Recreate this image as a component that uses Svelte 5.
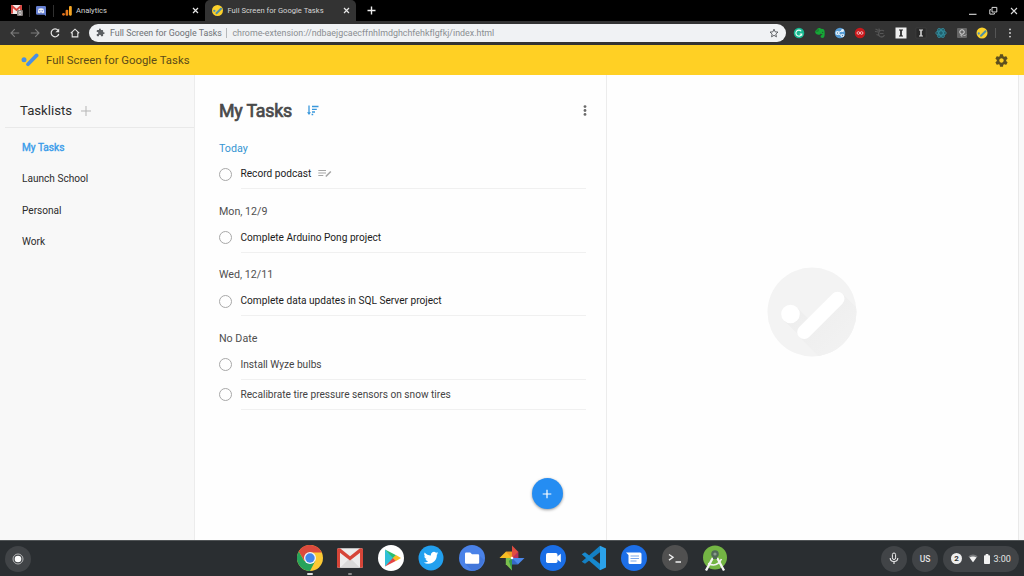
<script>
  const lists = ['My Tasks', 'Launch School', 'Personal', 'Work'];
  const groups = [
    { label: 'Today', today: true, dark: true, tasks: [{ title: 'Record podcast', notes: true }] },
    { label: 'Mon, 12/9', dark: true, tasks: [{ title: 'Complete Arduino Pong project' }] },
    { label: 'Wed, 12/11', dark: true, tasks: [{ title: 'Complete data updates in SQL Server project' }] },
    { label: 'No Date', tasks: [{ title: 'Install Wyze bulbs' }, { title: 'Recalibrate tire pressure sensors on snow tires' }] }
  ];
  const apps = ['chrome', 'gmail', 'play', 'twitter', 'files', 'photos', 'duo', 'code', 'messages', 'terminal', 'android'];
  const extensions = ['grammarly', 'evernote', 'share', 'lastpass', 'dim', 'insta', 'instadark', 'react', 'search', 'tasks'];
</script>

{#snippet tasksLogo()}
  <svg width="11" height="11" viewBox="0 0 22 22">
    <circle cx="11" cy="11" r="11" fill="#fbd02b" />
    <circle cx="4.6" cy="11.6" r="2.3" fill="#4b8fc0" />
    <path d="M9 16.5 18 7.5" stroke="#4b8fa8" stroke-width="4" stroke-linecap="round" />
  </svg>
{/snippet}

{#snippet cross()}
  <svg width="7" height="7" viewBox="0 0 7 7"><path d="M1 1l5 5M6 1 1 6" stroke="#e8e8e8" stroke-width="1.2" /></svg>
{/snippet}

<div class="screen">
  <div class="tabs">
    <span class="pinned first">
      <svg width="12" height="11" viewBox="0 0 12 11">
        <rect width="11" height="9" rx="1" fill="#f4e9e8" />
        <path d="M1 8.5V1l4.5 4L10 1v5" fill="none" stroke="#d5423c" stroke-width="1.9" />
        <rect x="6" y="5" width="6" height="6" rx="1" fill="#88807f" />
        <path d="M8 6.5h2v3H8z" fill="none" stroke="#ddd" stroke-width=".8" />
      </svg>
    </span>
    <span class="pinned second">
      <svg width="10" height="10" viewBox="0 0 10 10">
        <path d="M1.300 0h7.400A1.300 1.300 0 0 1 10 1.300V10L8.300 8.800h-7A1.300 1.300 0 0 1 0 7.500V1.300A1.300 1.300 0 0 1 1.300 0z" fill="#6680d2" />
        <path d="M1.800 6.600 2.500 2.800q2.500-1 5 0l.7 3.800-1.700.6-.5-.7H4l-.5.7z" fill="#f2f4fb" />
        <circle cx="3.800" cy="4.800" r=".7" fill="#6680d2" /><circle cx="6.200" cy="4.800" r=".7" fill="#6680d2" />
      </svg>
    </span>
    <div class="tab analytics">
      <svg width="10" height="10" viewBox="0 0 10 10">
        <circle cx="1.500" cy="8.300" r="1.400" fill="#e0701c" />
        <rect x="3.600" y="3.700" width="2.600" height="6" rx="1" fill="#e5791d" />
        <rect x="7" y="0" width="2.800" height="9.700" rx="1.100" fill="#f5a623" />
      </svg>
      <span class="title">Analytics</span>
      {@render cross()}
    </div>
    <div class="tab active">
      {@render tasksLogo()}
      <span class="title">Full Screen for Google Tasks</span>
      {@render cross()}
    </div>
    <svg class="newtab" width="9" height="9" viewBox="0 0 9 9"><path d="M4.500.5v8M.5 4.500h8" stroke="#eee" stroke-width="1.400" /></svg>
    <div class="window">
      <svg width="8" height="10" viewBox="0 0 8 10"><path d="M0 8.300h7.500" stroke="#ddd" stroke-width="1.100" /></svg>
      <svg width="9" height="9" viewBox="0 0 9 9"><path d="M3 1.400h4.800v4.600H3zM2 3.700H.8V8.100h4.600V7" fill="none" stroke="#ddd" stroke-width="1" /></svg>
      <svg width="8" height="8" viewBox="0 0 8 8"><path d="M1 1l6 6M7 1 1 7" stroke="#ddd" stroke-width="1.100" /></svg>
    </div>
  </div>

  <div class="toolbar">
    <div class="nav">
      <svg width="10" height="10" viewBox="0 0 10 10"><path d="M9.200 5H1.200M4.800 1.200 1 5l3.800 3.800" fill="none" stroke="#7d7d7d" stroke-width="1.100" /></svg>
      <svg width="10" height="10" viewBox="0 0 10 10"><path d="M.8 5h8M5.200 1.200 9 5 5.200 8.800" fill="none" stroke="#7d7d7d" stroke-width="1.100" /></svg>
      <svg width="10" height="10" viewBox="0 0 10 10"><path d="M8.100 2.400A3.900 3.900 0 1 0 8.800 6" fill="none" stroke="#e6e6e6" stroke-width="1.200" /><path d="M9.200.5v3.800H5.400z" fill="#e6e6e6" /></svg>
      <svg width="10" height="10" viewBox="0 0 10 10"><path d="M.8 5.200 5 1.200l4.200 4M2.200 4.600v4.300h5.600V4.600" fill="none" stroke="#e6e6e6" stroke-width="1.100" /></svg>
    </div>
    <div class="omnibox">
      <svg width="9" height="9" viewBox="0 0 24 24"><path fill="#5b5f63" d="M20.500 11H19V7a2 2 0 0 0-2-2h-4V3.500a2.500 2.500 0 0 0-5 0V5H4a2 2 0 0 0-2 2v3.800h1.500a2.700 2.700 0 0 1 0 5.400H2V20c0 1.100.9 2 2 2h3.800v-1.500a2.700 2.700 0 0 1 5.400 0V22H17a2 2 0 0 0 2-2v-4h1.500a2.500 2.500 0 0 0 0-5z" /></svg>
      <span class="site">Full Screen for Google Tasks</span>
      <span class="bar"></span>
      <span class="url">chrome-extension://ndbaejgcaecffnhlmdghchfehkflgfkj/index.html</span>
      <svg class="star" width="10" height="10" viewBox="0 0 24 24"><path d="m12 2.800 2.700 6.400 6.900.6-5.200 4.600 1.500 6.800-5.900-3.600-5.900 3.600 1.500-6.800-5.200-4.600 6.900-.6z" fill="none" stroke="#55595d" stroke-width="2.200" /></svg>
    </div>
    <div class="extensions">
      {#each extensions as e}
        <svg width="12" height="12" viewBox="0 0 24 24">
          {#if e === 'grammarly'}
            <circle cx="12" cy="12" r="10.500" fill="#17b890" />
            <path d="M16.500 8.500A6 6 0 1 0 17.500 14h-4M17.500 14v3.500" fill="none" stroke="#eafff8" stroke-width="2.200" />
          {:else if e === 'evernote'}
            <path d="M2 8.500 8.500 2H12q1 0 1.500 1.500 6 0 7 2.500 1.500 4 .8 10-.5 6-4.300 6-4.500 0-4-3.500.3-2.500 4-2.300l-.2-1.200q-2-.2-3.300-2-.5 3-4.500 2.500-4.500-.3-5.500-2.500Q2.500 11 2 8.500z" fill="#16a637" />
            <path d="M8.300 3v5.300H3" fill="none" stroke="#1c5a2b" stroke-width="1.200" /><circle cx="17.300" cy="10.500" r="1.200" fill="#24432b" />
          {:else if e === 'share'}
            <circle cx="12" cy="12" r="10.500" fill="#559bd4" />
            <path d="M7 12l10-5M7 12l9 6" stroke="#eef6fc" stroke-width="2" />
            <circle cx="7" cy="12" r="4" fill="#e5f1fa" /><circle cx="17" cy="7" r="3" fill="#e5f1fa" /><circle cx="17" cy="17" r="3.600" fill="#d9eaf7" />
            <circle cx="7" cy="12" r="1.400" fill="#4b80b0" /><circle cx="17" cy="17" r="1.300" fill="#4b80b0" />
          {:else if e === 'lastpass'}
            <circle cx="12" cy="12" r="10.500" fill="#c8191d" />
            <circle cx="8.800" cy="12" r="2.700" fill="none" stroke="#f3c7c7" stroke-width="1.800" /><circle cx="15.200" cy="12" r="2.700" fill="none" stroke="#f3c7c7" stroke-width="1.800" />
          {:else if e === 'dim'}
            <path d="M3 4l6 3M2 9l7 1M10 3l1 5q5-3 9 0M11 8q-4 8 1 11 6 3 9-3M12 13h7M5 15l5 2" fill="none" stroke="#565656" stroke-width="2.400" />
          {:else if e === 'insta'}
            <path d="M1 1h22v22H1z" fill="#efefef" /><path d="M8 5h8v2h-2.300v10H16v2H8v-2h2.300V7H8z" fill="#202020" />
          {:else if e === 'instadark'}
            <path d="M2 2h20v20H2z" fill="#292929" stroke="#444" /><path d="M8 5h8v2h-2.500v10H16v2H8v-2h2.500V7H8z" fill="#dcdcdc" />
          {:else if e === 'react'}
            <circle cx="12" cy="12" r="9" fill="#20606d" />
            <g fill="none" stroke="#358f9f" stroke-width="1.600"><ellipse cx="12" cy="12" rx="10.500" ry="4.200" /><ellipse cx="12" cy="12" rx="10.500" ry="4.200" transform="rotate(60 12 12)" /><ellipse cx="12" cy="12" rx="10.500" ry="4.200" transform="rotate(120 12 12)" /></g>
          {:else if e === 'search'}
            <rect x="2" y="2" width="20" height="20" rx="2" fill="#666" />
            <circle cx="12" cy="10" r="4.500" fill="none" stroke="#dedede" stroke-width="2" /><path d="M10 15v3h3M15 16l2 2 3-3" stroke="#ccc" stroke-width="1.800" fill="none" />
          {:else}
            <circle cx="12" cy="12" r="11" fill="#fbd02b" /><circle cx="5.500" cy="13" r="2.300" fill="#4b8fc0" /><path d="M10 17.500 19 8.500" stroke="#4b8fa8" stroke-width="4" stroke-linecap="round" />
          {/if}
        </svg>
      {/each}
    </div>
    <span class="divider"></span>
    <svg class="menu" width="4" height="10" viewBox="0 0 4 10"><g fill="#ddd"><circle cx="2" cy="1.400" r=".9" /><circle cx="2" cy="5" r=".9" /><circle cx="2" cy="8.600" r=".9" /></g></svg>
  </div>

  <header>
    <svg width="18" height="14" viewBox="0 0 18 14"><circle cx="3" cy="6.800" r="2.500" fill="#4a8fe2" /><path d="M7 11.200 15.600 2.400" stroke="#4a8fe2" stroke-width="3.700" stroke-linecap="round" /></svg>
    <span>Full Screen for Google Tasks</span>
    <svg class="gear" width="15" height="15" viewBox="0 0 24 24"><path fill="#5e4f1e" d="M19.430 12.980c.040-.320.070-.640.070-.980s-.030-.660-.070-.980l2.110-1.650c.190-.150.240-.420.120-.640l-2-3.460c-.120-.220-.390-.300-.610-.220l-2.490 1c-.520-.400-1.080-.730-1.690-.980l-.380-2.650A.488.488 0 0 0 14 2h-4c-.250 0-.460.180-.490.420l-.380 2.650c-.610.250-1.170.590-1.690.980l-2.490-1c-.230-.090-.490 0-.610.220l-2 3.460c-.130.220-.070.490.120.640l2.110 1.650c-.040.320-.070.650-.070.980s.030.660.070.980l-2.110 1.650c-.190.150-.240.420-.120.640l2 3.460c.120.220.390.300.610.220l2.490-1c.520.400 1.080.730 1.690.980l.380 2.650c.030.240.240.420.490.420h4c.250 0 .460-.180.490-.420l.380-2.650c.610-.250 1.170-.590 1.690-.980l2.490 1c.230.090.490 0 .610-.220l2-3.460c.120-.220.070-.490-.120-.640l-2.110-1.650zM12 15.500c-1.930 0-3.500-1.570-3.500-3.500s1.570-3.500 3.500-3.500 3.500 1.570 3.500 3.500-1.570 3.500-3.500 3.500z" /></svg>
  </header>

  <div class="content">
    <aside>
      <div class="aside-head">
        <span>Tasklists</span>
        <svg width="10" height="10" viewBox="0 0 10 10"><path d="M5 0v10M0 5h10" stroke="#b5b5b5" stroke-width="1" /></svg>
      </div>
      <nav>
        {#each lists as l, i}<div class:current={i === 0}>{l}</div>{/each}
      </nav>
    </aside>

    <main>
      <div class="heading">
        <h1>My Tasks</h1>
        <svg width="12" height="11" viewBox="0 0 12 11"><path d="M2 .5v8M5 1.500h6.500M5 4.300h4.800M5 7h3M4.600 9.500h1.600" stroke="#3a98dc" stroke-width="1.300" /><path d="M0 7.300h4L2 10z" fill="#3a98dc" /></svg>
        <svg class="dots" width="4" height="11" viewBox="0 0 4 11"><g fill="#6b6b6b"><circle cx="2" cy="1.600" r="1.400" /><circle cx="2" cy="5.500" r="1.400" /><circle cx="2" cy="9.400" r="1.400" /></g></svg>
      </div>
      {#each groups as g}
        <section>
          <h2 class:today={g.today}>{g.label}</h2>
          {#each g.tasks as t}
            <div class="task" class:dark={g.dark}>
              <span class="ring"></span>
              <div class="body">
                <span>{t.title}</span>
                {#if t.notes}
                  <svg width="14" height="9" viewBox="0 0 14 9"><path d="M.3 1.500h7.700M.3 4h7.700M.3 6.500h5" stroke="#a5a5a5" stroke-width="1" /><path d="M7.800 7.500 12.800 2.500" stroke="#a5a5a5" stroke-width="1.600" /></svg>
                {/if}
              </div>
            </div>
          {/each}
        </section>
      {/each}
      <button aria-label="Add task"><svg width="10" height="10" viewBox="0 0 10 10"><path d="M5 .7v8.600M.7 5h8.600" stroke="#fff" stroke-width="1.200" /></svg></button>
    </main>

    <div class="detail">
      <svg width="90" height="90" viewBox="0 0 90 90">
        <clipPath id="disc"><circle cx="45" cy="45" r="44.500" /></clipPath>
        <linearGradient id="shade" x1="0" y1="0" x2="1" y2="1"><stop offset="0" stop-color="#ececec" /><stop offset=".75" stop-color="#f3f3f3" /></linearGradient>
        <g clip-path="url(#disc)">
          <rect width="90" height="90" fill="#f3f3f3" />
          <path d="M17 53.600 30 40.500 70 80 57 93z" fill="url(#shade)" />
          <path d="M32.200 70 75.500 26.700 110 61 66 104z" fill="url(#shade)" />
        </g>
        <circle cx="23.500" cy="47" r="9.300" fill="#fff" />
        <path d="M37.200 65 70.500 31.700" stroke="#fff" stroke-width="14" stroke-linecap="round" />
      </svg>
    </div>
    <div class="scroll"></div>
  </div>

  <footer>
    <div class="round launcher"><svg width="12" height="12" viewBox="0 0 12 12"><circle cx="6" cy="6" r="5" fill="none" stroke="#b5b6b7" stroke-width="1" /><circle cx="6" cy="6" r="3.300" fill="#fff" /></svg></div>
    <div class="apps">
      {#each apps as a}
        <div class="app {a}">
          <svg width="26" height="26" viewBox="0 0 26 26">
            {#if a === 'chrome'}
              <circle cx="13" cy="13" r="13" fill="#fcc934" />
              <path d="M1.740 6.500A13 13 0 0 1 24.800 7.500H13L7.500 16z" fill="#dc4a3d" />
              <path d="M13 26 18.200 16 13 13 7.400 16.200 1.740 6.500A13 13 0 0 0 13 26z" fill="#26a35a" />
              <circle cx="13" cy="13" r="6" fill="#f2f5fa" /><circle cx="13" cy="13" r="4.700" fill="#4286ec" />
            {:else if a === 'gmail'}
              <rect y="3.300" width="26" height="19.400" rx="1.500" fill="#ececec" /><path d="M3 22.700 13 13l10 9.700z" fill="#d9d9d9" />
              <path d="M0 4.800Q0 3.300 1.500 3.300H3l10 8 10-8h1.500Q26 3.300 26 4.800v16.400q0 1.500-1.500 1.500H23V7.800L13 15.500 3 7.800v14.900H1.500Q0 22.700 0 21.200z" fill="#d64538" />
            {:else if a === 'play'}
              <circle cx="13" cy="13" r="13" fill="#fff" />
              <path d="M7 4.500v17l9-8.500z" fill="#2fc0d8" /><path d="M7 4.500 18.200 10.200l-3 3z" fill="#2abf70" /><path d="M7 21.500 18.200 15.800l-3-3z" fill="#e54545" /><path d="M18 9.900 23 13l-5 3.100L14.800 13z" fill="#f8bd25" />
            {:else if a === 'twitter'}
              <circle cx="13" cy="13" r="12.500" fill="#22a0ef" />
              <path transform="translate(5.700 5.500) scale(.61)" fill="#fff" d="M23.950 4.570a10 10 0 0 1-2.820.775 4.960 4.960 0 0 0 2.160-2.720 9.900 9.900 0 0 1-3.120 1.190 4.920 4.920 0 0 0-8.390 4.480C7.690 8.100 4.070 6.130 1.640 3.160a4.920 4.920 0 0 0 1.520 6.570 4.900 4.900 0 0 1-2.230-.61v.06a4.920 4.920 0 0 0 3.950 4.830 4.900 4.900 0 0 1-2.210.08 4.940 4.940 0 0 0 4.600 3.420A9.870 9.870 0 0 1 0 19.540a14 14 0 0 0 7.550 2.210c9.050 0 14-7.500 14-13.980l-.02-.64a10 10 0 0 0 2.420-2.560z" />
            {:else if a === 'files'}
              <circle cx="13" cy="13" r="13" fill="#4a82e8" /><path d="M6 18.500 20 10l5 5q-2 8-9 10.500l-3 .3z" fill="#4277da" />
              <path d="M6 8.700q0-1.200 1.200-1.200h4L13 9.300h6q1.200 0 1.200 1.200v7q0 1.200-1.200 1.200H7.200Q6 18.700 6 17.500z" fill="#fff" />
            {:else if a === 'photos'}
              <path d="M13 .5 19.200 6.800V13H13z" fill="#df4d40" /><path d="M.5 13 6.800 6.800H13V13z" fill="#f8bd23" /><path d="M25.500 13 19.200 19.200H13V13z" fill="#4a87ea" /><path d="M13 25.500 6.800 19.200V13H13z" fill="#7bc04d" />
              <path d="M13 13 19.200 6.800V13z" fill="#b92f5c" /><path d="M13 13l6.200 6.200H13z" fill="#3468c4" /><path d="M13 13v12.500L9.800 16z" fill="#37994b" /><path d="M13 13 6.800 6.800H13z" fill="#ef9c25" /><circle cx="13" cy="13" r="1.300" fill="#fff" />
            {:else if a === 'duo'}
              <circle cx="13" cy="13" r="13" fill="#1a6ee6" /><rect x="6" y="8" width="11.500" height="10" rx="1.700" fill="#fff" /><path d="M17 11.800 20.800 8.700v8.600L17 14.200z" fill="#fff" />
            {:else if a === 'code'}
              <path d="M19 7.200 4 18.700.7 16.800 19 .7z" fill="#147fc2" /><path d="M19 18.800 4 7.300.7 9.200 19 25.300z" fill="#1789ce" /><path d="M19 .7 25 3.500v19L19 25.300z" fill="#2ba2ea" />
            {:else if a === 'messages'}
              <circle cx="13" cy="13" r="13" fill="#1d6fe7" /><path d="M5 7.500h14q1.500 0 1.500 1.500v8.500q0 1.500-1.500 1.500H9q-1.500 0-1.500-1.500V10z" fill="#fff" /><path d="M9.500 11h8.500M9.500 13.500h8.500M9.500 16h6" stroke="#7ca9ec" stroke-width="1.100" />
            {:else if a === 'terminal'}
              <circle cx="13" cy="13" r="13" fill="#505050" /><path d="m7 9.500 4 2.800-4 2.800M13.500 17h5.500" fill="none" stroke="#f0f0f0" stroke-width="1.400" />
            {:else}
              <circle cx="13" cy="12.500" r="12" fill="#74b544" /><circle cx="13" cy="9" r="3.800" fill="#526958" /><circle cx="13" cy="9" r="1.600" fill="#8a9d8c" />
              <path d="M10.800 13 4 25.500M15.200 13 22 25.500" stroke="#f4f4f4" stroke-width="2.300" /><path d="M6 18.500q9 4.500 13.500-4.500" fill="none" stroke="#f4f4f4" stroke-width="1.600" /><path d="M11 11.500h4v2.500h-4z" fill="#526958" />
            {/if}
          </svg>
        </div>
      {/each}
    </div>
    <div class="tray">
      <div class="round"><svg width="10" height="13" viewBox="0 0 10 13"><rect x="3.400" y="1" width="3.200" height="6.500" rx="1.600" fill="none" stroke="#eee" stroke-width="1" /><path d="M1.200 6q0 3.500 3.800 3.500T8.800 6M5 9.500v2.500" fill="none" stroke="#eee" stroke-width="1.100" /></svg></div>
      <div class="round us">US</div>
      <div class="status">
        <span class="count">2</span>
        <svg width="10" height="9" viewBox="0 0 10 9"><path d="M.4 2.200Q5-1 9.600 2.200L5 8.300z" fill="#77797b" /><path d="M1.500 3.600Q5 1.500 8.500 3.600L5 8.300z" fill="#f2f2f2" /></svg>
        <svg width="6" height="10" viewBox="0 0 6 10"><path d="M1.700 0h2.600v1.200H5.200q.8 0 .8.800v7.200q0 .8-.8.800H.8Q0 10 0 9.200V2q0-.8.8-.8h.9z" fill="#f2f2f2" /></svg>
        <span class="time">3:00</span>
      </div>
    </div>
  </footer>
</div>

<style>
  .screen { width: 1024px; height: 576px; display: flex; flex-direction: column; overflow: hidden; font-family: Roboto, sans-serif; background: #fefefe; }
  .screen :global(svg) { display: block; flex: none; }
  .tabs { height: 21px; background: #000; display: flex; align-items: center; flex: none; }
  .pinned { width: 24px; height: 12px; box-sizing: border-box; border-right: 1px solid #303030; display: flex; align-items: center; justify-content: center; }
  .pinned.first { width: 30px; padding-left: 5px; }
  .pinned.second { padding-right: 2px; }
  .tab { display: flex; align-items: center; box-sizing: border-box; height: 21px; font-size: 7.600px; color: #d5d5d5; }
  .title { flex: 1; margin-left: 4.500px; white-space: nowrap; }
  .analytics { width: 151px; padding: 0 6.500px 0 7.500px; }
  .active { width: 151px; padding: 0 6.500px 0 7px; background: #333; border-radius: 5px 5px 0 0; }
  .newtab { margin-left: 10.500px; }
  .window { margin-left: auto; margin-right: 6px; display: flex; align-items: center; gap: 12px; }
  .toolbar { height: 24px; background: #333; display: flex; align-items: center; flex: none; box-sizing: border-box; padding-bottom: 1px; }
  .nav { display: flex; gap: 10.200px; width: 79px; padding-left: 9.500px; box-sizing: border-box; width: 88.500px; }
  .omnibox { width: 697.500px; height: 18px; box-sizing: border-box; border-radius: 9px; background: #f0f2f4; display: flex; align-items: center; padding: 0 7px; font-size: 8.850px; line-height: 18px; color: #6d7175; }
  .site { margin-left: 5.500px; white-space: nowrap; }
  .bar { width: 1px; height: 10px; background: #b5b8bb; margin: 0 5.500px 0 4px; }
  .url { color: #8a8e92; white-space: nowrap; letter-spacing: .015px; }
  .star { margin-left: auto; }
  .extensions { display: flex; gap: 8.300px; margin-left: 7.300px; }
  .divider { width: 1px; height: 10px; background: #555; margin-left: 7px; }
  .menu { margin-left: 12px; }
  header { height: 30px; background: #ffd024; display: flex; align-items: center; flex: none; box-sizing: border-box; padding: 0 15px 0 21px; font-size: 11.350px; color: #5b4b19; }
  header span { margin-left: 7px; padding-bottom: 1px; }
  .gear { margin-left: auto; }
  .content { flex: 1; display: flex; min-height: 0; }
  aside { width: 195px; box-sizing: border-box; background: #f8f8f8; border-right: 1px solid #ececec; }
  .aside-head { height: 53px; box-sizing: border-box; border-bottom: 1px solid #e9e9e9; margin-left: 5px; padding: 18px 0 0 15px; display: flex; align-items: center; font-size: 13.200px; color: #2e2e2e; }
  .aside-head svg { margin: 2px 0 0 8.500px; }
  nav { padding: 4px 0 0 22px; font-size: 10.100px; color: #2c2c2c; }
  nav div { height: 31.300px; line-height: 31.300px; }
  .current { color: #3a9cea; -webkit-text-stroke: .4px #3a9cea; }
  main { width: 412px; box-sizing: border-box; border-right: 1px solid #ececec; padding: 0 20.500px 0 24px; display: flex; flex-direction: column; }
  .heading { height: 51px; padding-top: 19px; box-sizing: border-box; display: flex; align-items: center; }
  h1 { margin: 0 15px 0 0; font-size: 17.800px; letter-spacing: -.2px; font-weight: 400; -webkit-text-stroke: .7px #4a4a4a; color: #4a4a4a; white-space: nowrap; }
  .heading svg { margin-top: 1px; }
  .heading .dots { margin-left: auto; margin-right: -1px; }
  h2 { margin: 0; height: 33px; box-sizing: border-box; padding-top: 11.500px; font-size: 10.700px; line-height: 22px; font-weight: 400; color: #505050; }
  .today { color: #3595d2; }
  .task { height: 30.450px; display: flex; align-items: center; color: #444; font-size: 10.130px; }
  .dark { color: #1c1c1c; }
  .ring { width: 13px; height: 13px; box-sizing: border-box; border: 1px solid #a8a8a8; border-radius: 50%; flex: none; }
  .body { flex: 1; height: 100%; box-sizing: border-box; border-bottom: 1px solid #f0f0f0; margin-left: 8.500px; display: flex; align-items: center; gap: 7px; }
  button { margin: auto 23px 31px auto; width: 31px; height: 31px; border: 0; padding: 0; border-radius: 50%; background: #258df2; box-shadow: 0 1px 3px rgba(0,0,0,.4); display: grid; place-items: center; }
  .detail { flex: 1; display: grid; place-items: center; padding: 9px 1px 0 0; }
  .scroll { width: 6px; box-sizing: border-box; background: #f9f9f9; border-left: 1px solid #e9e9e9; }
  footer { height: 36px; box-sizing: border-box; background: #2a2e31; border-top: 1px solid #505456; display: flex; align-items: center; flex: none; padding: 0 5px; }
  .round { width: 26px; height: 26px; border-radius: 50%; background: #414447; display: grid; place-items: center; }
  .apps { display: flex; gap: 14.550px; margin-left: 265.700px; }
  .app { position: relative; top: -.5px; }
  .chrome::after, .gmail::after { content: ''; position: absolute; left: 10px; top: 28px; width: 6px; height: 1.500px; border-radius: 1px; background: #ddd; }
  .gmail::after { left: 11px; width: 4px; background: #888; }
  .tray { margin-left: auto; display: flex; gap: 5px; }
  .us { color: #e2e2e2; font-size: 8.500px; font-weight: 500; }
  .status { width: 76px; height: 26px; border-radius: 13px; box-sizing: border-box; padding: 0 8px; background: #414447; display: flex; align-items: center; color: #e4e4e4; font-size: 9px; }
  .count { width: 11px; height: 11px; border-radius: 50%; background: #eee; color: #333; font-size: 8px; font-weight: 700; line-height: 11px; text-align: center; margin-right: 6px; }
  .status svg + svg { margin-left: 5.500px; }
  .time { margin-left: 4px; }
</style>
